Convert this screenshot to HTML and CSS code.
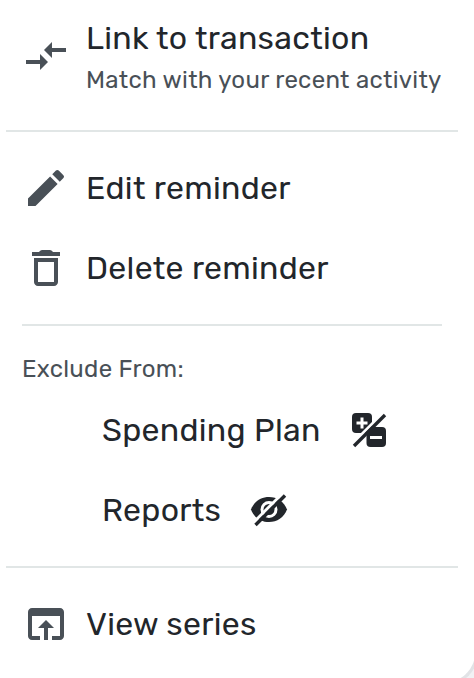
FILE: index.html
```html
<!DOCTYPE html>
<html lang="en">
<head>
    <meta charset="UTF-8">
    <meta name="viewport" content="width=device-width, initial-scale=1.0">
    <title>Reminder menu</title>
    <link rel="stylesheet" href="styles.css">
</head>
<body>
    <div class="menu">
        <div class="item link-item">
            <svg class="icon" viewBox="0 0 24 24"><path d="M9.01 14H2v2h7.01v3L13 15l-3.99-4v3zm5.98-1v-3H22V8h-7.01V5L11 9l3.99 4z"/></svg>
            <div class="text">
                <span class="label">Link to transaction</span>
                <span class="hint">Match with your recent activity</span>
            </div>
        </div>
        <hr class="line">
        <div class="group">
            <div class="item">
                <svg class="icon" viewBox="0 0 24 24"><path d="M3 17.25V21h3.75L17.81 9.94l-3.75-3.75L3 17.25zM20.71 7.04a1 1 0 0 0 0-1.41l-2.34-2.34a1 1 0 0 0-1.41 0l-1.83 1.83 3.75 3.75 1.83-1.83z"/></svg>
                <span class="label">Edit reminder</span>
            </div>
            <div class="item">
                <svg class="icon" viewBox="0 0 24 24"><path d="M6 19c0 1.1.9 2 2 2h8c1.1 0 2-.9 2-2V7H6v12zM8 9h8v10H8V9zm7.500-5l-.6-.6c-.3-.3-.6-.4-1-.4h-3.800c-.4 0-.7.1-1 .4L8.500 4H5v2h14V4z"/></svg>
                <span class="label">Delete reminder</span>
            </div>
        </div>
        <hr class="line short">
        <div class="exclude">
            <span class="heading">Exclude From:</span>
            <div class="item sub-item">
                <span class="label">Spending Plan</span>
                <svg class="sub-icon" viewBox="0 0 40 40">
                    <rect x="3" y="3" width="20" height="20" rx="4"/>
                    <path class="cut" d="M7.500 13h11M13 7.500v11"/>
                    <path class="gap" d="M2.500 34.500L34.500 2.500"/>
                    <path d="M37 21v12a4 4 0 0 1-4 4H21.500a4 4 0 0 1-4-4v-8.500l7.500-7.500h8a4 4 0 0 1 4 4z"/>
                    <path class="cut" d="M21 27.500h12"/>
                    <path class="slash" d="M5 36L36 5"/>
                </svg>
            </div>
            <div class="item sub-item">
                <span class="label">Reports</span>
                <svg class="sub-icon" viewBox="0 0 40 40">
                    <path d="M2 19.500C5 11.500 12 7 20 7s15 4.500 18 12.500C35 27.500 28 32 20 32S5 27.500 2 19.500z"/>
                    <circle class="ring" cx="20" cy="19.500" r="7"/>
                    <path class="gap" d="M4 33L33.500 3.500"/>
                    <path class="slash" d="M6.500 35L36 5.500"/>
                </svg>
            </div>
        </div>
        <hr class="line">
        <div class="item series-item">
            <svg class="icon" viewBox="0 0 24 24"><path d="M19 4H5c-1.11 0-2 .9-2 2v12c0 1.1.89 2 2 2h4v-2H5V8h14v10h-4v2h4c1.1 0 2-.9 2-2V6c0-1.1-.89-2-2-2zm-7 6l-4 4h3v6h2v-6h3l-4-4z"/></svg>
            <span class="label">View series</span>
        </div>
    </div>
</body>
</html>
```
FILE: styles.css
```css
body {
    margin: 0;
    height: 678px;
    overflow: hidden;
    background: #f1f2f4;
    font-family: 'Rubik', 'Roboto', sans-serif;
    color: #22262b;
}

.menu {
    box-sizing: border-box;
    width: 488px;
    height: 685px;
    margin-left: -10px;
    padding-left: 10px;
    background: #fff;
    border: solid #e1e3e6;
    border-width: 0 3px 3px 0;
    border-radius: 0 0 32px 24px;
}

.item {
    display: flex;
    align-items: center;
    height: 80px;
    padding-left: 22px;
}

.icon {
    flex: none;
    width: 48px;
    height: 48px;
    margin-right: 16px;
    fill: #495057;
}

.text {
    display: flex;
    flex-direction: column;
}

.label {
    font-size: 32px;
    line-height: 40px;
    letter-spacing: 0.3px;
    white-space: nowrap;
}

.hint,
.heading {
    font-size: 24px;
    line-height: 32px;
    letter-spacing: 0.29px;
    color: #495057;
    white-space: nowrap;
}

.hint {
    margin-top: 6px;
}

.link-item {
    box-sizing: border-box;
    height: 130px;
    padding-top: 18px;
    align-items: flex-start;
}

.link-item .icon {
    margin-top: 14px;
}

.line {
    width: 452px;
    height: 2px;
    margin: 0 0 0 6px;
    border: 0;
    background: #e1e6e6;
}

.line.short {
    width: 420px;
    margin-left: 22px;
}

.group {
    padding: 16px 0;
}

.exclude {
    box-sizing: border-box;
    height: 240px;
    padding-top: 27px;
}

.heading {
    display: block;
    height: 37px;
    margin-left: 22px;
}

.sub-item {
    padding-left: 102px;
}

.sub-icon {
    width: 40px;
    height: 40px;
    margin-left: 28px;
    fill: #22262b;
}

.sub-icon .cut,
.sub-icon .gap,
.sub-icon .ring {
    fill: none;
    stroke: #fff;
    stroke-width: 3;
}

.sub-icon .slash {
    fill: none;
    stroke: #22262b;
    stroke-width: 3.4;
}

.series-item {
    padding-top: 16px;
}
```
